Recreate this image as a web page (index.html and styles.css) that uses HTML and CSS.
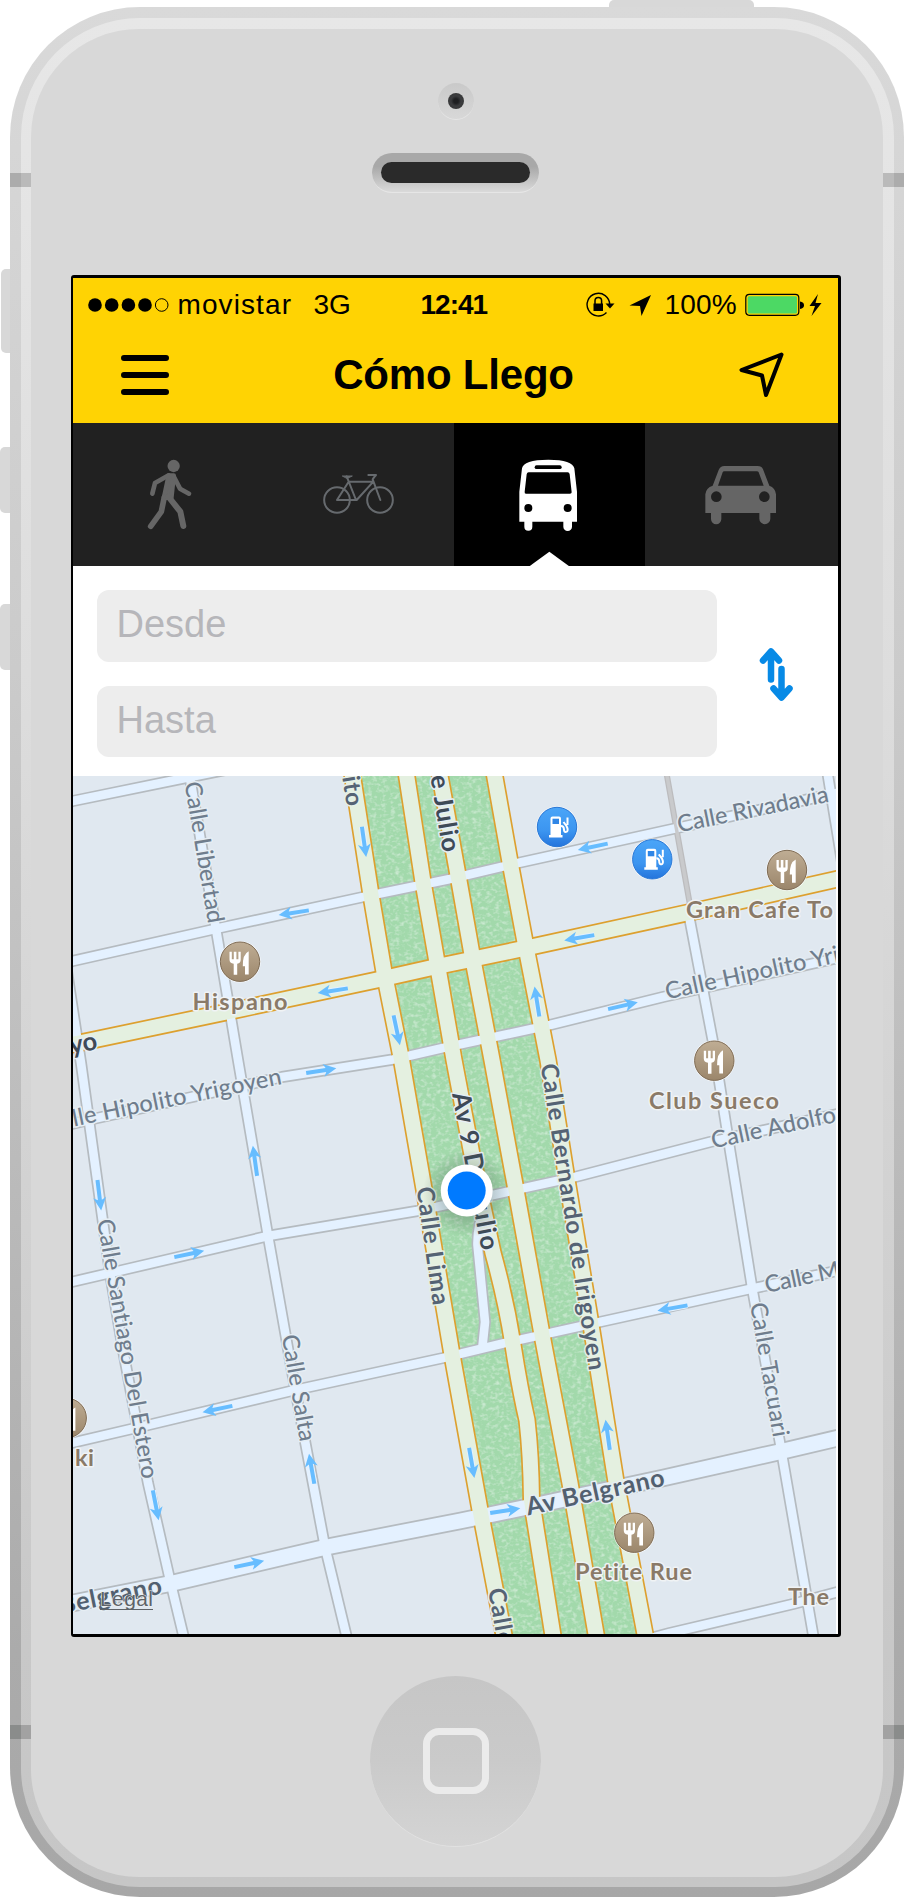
FILE: index.html
```html
<!DOCTYPE html>
<html lang="es">
<head>
<meta charset="utf-8">
<title>Cómo Llego</title>
<link rel="stylesheet" href="styles.css">
</head>
<body>
<div class="stage">
  <i class="key key-power"></i>
  <i class="key key-mute"></i>
  <i class="key key-up"></i>
  <i class="key key-down"></i>
  <div class="shell">
    <div class="bezel">
      <div class="face">
        <div class="camera"><i class="lens"></i></div>
        <div class="speaker"><i class="slot"></i></div>
        <main class="screen">
          <div class="statusbar">
            <svg class="signal" viewBox="0 0 82 14"><g><circle cx="7" cy="7" r="6.8"/><circle cx="23.7" cy="7" r="6.8"/><circle cx="40.4" cy="7" r="6.8"/><circle cx="57" cy="7" r="6.8"/><circle cx="73.7" cy="7" r="6.3" fill="none" stroke="#000" stroke-width="1"/></g></svg>
            <span class="carrier">movistar</span>
            <span class="network">3G</span>
            <span class="clock">12:41</span>
            <svg class="st-icons" viewBox="0 0 80 30">
              <path d="M20.5 22.500A11.300 11.300 0 1 1 23.700 14.500" fill="none" stroke="#000" stroke-width="1.400"/>
              <path d="M19.500 13.500h9l-4.500 5z"/>
              <path d="M7.500 13.500h9.500v7.500h-9.500z"/>
              <path d="M9 14v-3.200a3.300 3.300 0 0 1 6.600 0V14" fill="none" stroke="#000" stroke-width="1.500"/>
              <path d="M65 5 55.500 26 54 16 43.500 15.500z"/>
            </svg>
            <span class="percent">100%</span>
            <svg class="battery" viewBox="0 0 78 24">
              <rect x=".8" y="1.300" width="53" height="21" rx="3.500" fill="none" stroke="#000" stroke-width="1.200"/>
              <rect x="2.700" y="3.200" width="49.300" height="17.300" rx="1.500" fill="#4cd964"/>
              <path d="M55 8.500q4 .5 4 3.700t-4 3.700z"/>
              <path d="M73 1 64.500 13h5.500L66.500 23 76.500 10h-6z"/>
            </svg>
          </div>
          <header class="navbar">
            <svg class="menu" viewBox="0 0 48 40"><path d="M3 3h42M3 20h42M3 37h42" stroke="#000" stroke-width="6" stroke-linecap="round"/></svg>
            <h1 class="title">Cómo Llego</h1>
            <svg class="locate" viewBox="739 353 46 46"><path d="M781.500 355.500 741.500 371 762 376.500 766 396z" fill="none" stroke="#000" stroke-width="4" stroke-linejoin="round"/></svg>
          </header>
          <nav class="tabs">
            <a class="tab"><svg viewBox="39 474 573 429"><g fill="none" stroke="#666" stroke-linecap="round" stroke-linejoin="round"><circle cx="341" cy="603" r="18.500" fill="#666" stroke="none"/><path fill="#666" stroke-width="14" d="M326 632 341 632 334 698 312 698z"/><path stroke-width="14" d="M326 631 285 654 277 686M342 636 360 671 387 686"/><path stroke-width="17" d="M313 696 304 740 272 784"/><path stroke-width="18" d="M326 696 361 740 370 783"/></g></svg></a>
            <a class="tab"><svg viewBox="612 474 573 429"><g fill="none" stroke="#666a6e" stroke-width="6" stroke-linecap="round" stroke-linejoin="round"><circle cx="831" cy="705" r="38.500"/><circle cx="960" cy="705" r="38.500"/><path d="M831 705 866 650H940L890 705H831M860 634 888 705M925 630H948L942 637 938 643 961 705"/><path d="M848 633H877L862 640z" fill="#666a6e" stroke-width="3"/></g></svg></a>
            <a class="tab tab-on"><svg viewBox="14 474 573 429"><path fill="#fff" d="M210 770V680L218 610Q222 584 297 584 370 584 375 610L383 680V770H368V785a13 13 0 0 1-26 0V770H249V785a12 12 0 0 1-24 0V770z"/><path d="M238 622H355Q360 622 361 628L367 682Q367 686 362 686H230Q225 686 226 680L232 628Q233 622 238 622z"/><rect x="256" y="601" width="81" height="11" rx="5.500"/><circle cx="237" cy="729" r="12"/><circle cx="355" cy="729" r="12"/><path fill="#fff" d="M240 904 300 860 360 904z"/></svg></a>
            <a class="tab"><svg viewBox="587 474 573 429"><path fill="#656565" d="M768 744V688Q770 668 790 662L808 615Q813 603 825 603H925Q937 603 941 613L960 662Q978 668 980 688V744H963V761a16.500 16.500 0 0 1-33 0V744H816V762a15.500 15.500 0 0 1-31 0V744z"/><path fill="#212121" d="M806 662 820 622Q821 619 825 619H922Q927 619 928 622L943 662z"/><circle cx="801" cy="695" r="16" fill="#212121"/><circle cx="945" cy="695" r="16" fill="#212121"/></svg></a>
          </nav>
          <section class="search">
            <div class="fields">
              <div class="field">Desde</div>
              <div class="field">Hasta</div>
            </div>
            <svg class="swap" viewBox="0 0 36 56"><g fill="none" stroke="#078ae6" stroke-width="6.500" stroke-linecap="round" stroke-linejoin="round"><path d="M12 32.500V8M4 13.500 12 4.500 20 13.500"/><path d="M22.500 22V46M14.500 41.500 22.500 50.500 30.500 41.500"/><path d="M10 10h4M20.500 45h4"/></g></svg>
          </section>
          <section class="map">
            <svg class="map-canvas" viewBox="73 776 763 858">
              <defs>
                <filter id="grass" x="0" y="0" width="100%" height="100%">
                  <feTurbulence type="fractalNoise" baseFrequency=".22 .28" numOctaves="2" seed="4" result="n"/>
                  <feColorMatrix in="n" values="0 0 0 0 .8  0 0 0 0 .93  0 0 0 0 .84  1.300 0 0 0 -.6" result="w"/>
                  <feComposite in="w" in2="SourceGraphic" operator="in" result="c"/>
                  <feMerge><feMergeNode in="SourceGraphic"/><feMergeNode in="c"/></feMerge>
                </filter>
                <linearGradient id="brown" x2="0" y2="1"><stop offset="0" stop-color="#bfad94"/><stop offset="1" stop-color="#9b866b"/></linearGradient>
                <linearGradient id="blue" x2="0" y2="1"><stop offset="0" stop-color="#4aa5f8"/><stop offset=".6" stop-color="#3c95f0"/><stop offset="1" stop-color="#2474dc"/></linearGradient>
                <radialGradient id="halo"><stop offset=".4" stop-color="#46604e" stop-opacity=".38"/><stop offset="1" stop-color="#46604e" stop-opacity="0"/></radialGradient>
                <g id="arrow"><path d="M-15 0H7" stroke="#e4f1fe" stroke-width="6"/><path d="M-15-2H5L2.500-6.500 15.500 0 2.500 6.500 5 2H-15z" fill="#67bdff"/></g>
                <g id="food"><circle r="20.800" fill="#fff" opacity=".7"/><circle r="19.700" fill="url(#brown)" stroke="#7f6c55"/><path fill="#fff" d="M-10.500-10h2.300v7.500h2V-10h2.600v7.500h2V-10H.700V-2Q.700 1.500-2.800 2V13H-6.300V2Q-10.500 1.500-10.500-2zM8.700-10.500V12.800H5V4.500H2.800Q2.500-7.500 8.700-10.500z"/></g>
                <g id="fuel"><circle r="20.800" fill="#fff" opacity=".7"/><circle r="19.700" fill="url(#blue)" stroke="#2a78d6"/><path fill="#fff" d="M-6.500-8.500Q-6.500-10.500-4.500-10.500H2Q4-10.500 4-8.500V8H5.500V10.500H-8V8H-6.500z"/><path fill="#2f86e6" d="M-4.500-8.300H2V-3H-4.500z"/><path d="M4-1Q7-1 7 3 7.500 6 10 4.500 11.500 3 9.500-1L6.500-5M10.500-9.500V-2" fill="none" stroke="#fff" stroke-width="2"/></g>
                <path id="cerrito" d="M349 755 352.500 776 371 895 384 972 401 1057 425 1195 451.700 1353 480 1510 503.700 1634 508 1655"/>
                <path id="julioW" d="M403 755 406.700 776 423 882 438 968 454 1060 473 1160 493 1253Q506 1300 513 1345T527 1420Q531 1455 531.500 1500L552.700 1634 556 1655"/>
                <path id="julioE" d="M437 755 440 776 458.500 878 473 960 492 1060 516 1190 543 1340 570 1483 596 1634 600 1655"/>
                <path id="irigoyen" d="M491 755 494.700 776 510 862 525 942 548 1060 566.700 1178 590.700 1323 615.700 1480 645 1634 649 1655"/>
                <path id="mayo" d="M50 1049 79 1043 226.700 1012 376.700 980 430 968 533 946.500 688 912.700 860 874"/>
                <path id="belgrano" d="M50 1608 73 1603 173 1583 326.700 1547 460 1521 530 1506.500 663 1478 780 1451.700 860 1433"/>
                <g id="minor">
                  <path d="M50 806 73 801 195 776 250 765"/>
                  <path d="M50 966 73 961 215 929 363 897 450 879 518 863 677 828 860 788"/>
                  <path d="M50 1129 93 1119 282 1077 393 1059.500 443 1048 550 1025 663 997 860 953"/>
                  <path d="M50 1287 110 1273 268 1236 417 1211 493 1195 575 1177 710 1142 860 1109"/>
                  <path d="M50 1448 140 1427 293 1390.500 443 1358 505 1343 600 1322 750 1289 860 1266"/>
                  <path d="M640 1641 670 1633 793 1604 860 1586"/>
                  <path d="M66 965 81 1063 110 1273 123 1350 148 1483 170 1580 183 1634 188 1655"/>
                  <path d="M188 765 190 778 216 929 238 1060 268 1236 295 1388 325 1547 346 1634 351 1655"/>
                  <path d="M689 916 713 1042 730 1150 752 1287 780 1443 813 1634 817 1655"/>
                  <path d="M825 760 828 776 845 880"/>
                  <path d="M486 1205Q477 1225 477.500 1245L480 1270 485 1322 482.500 1346"/>
                </g>
              </defs>
              <rect x="73" y="776" width="765" height="858" fill="#e0e8f0"/>
              <path filter="url(#grass)" fill="#a2d9ab" d="M352 776 371 895 401 1057 451 1353 480 1510 503 1634H645L616 1480 591 1323 548 1060 525 942 495 776z"/>
              <g fill="none" stroke-linejoin="round">
                <g stroke="#b5bbc0"><use href="#minor" stroke-width="12"/><use href="#belgrano" stroke-width="18.500"/></g>
                <path d="M664 760 667 776 690 905" stroke="#bcbcbe" stroke-width="6"/>
                <g stroke="#dda02f" stroke-width="18.300"><use href="#mayo"/><use href="#cerrito"/><use href="#julioW"/><use href="#julioE"/><use href="#irigoyen"/></g>
                <g stroke="#e4f1ff"><use href="#minor" stroke-width="8.600"/><use href="#belgrano" stroke-width="15"/></g>
                <path d="M664 760 667 776 690 905" stroke="#c9cacc" stroke-width="3.500"/>
                <g stroke="#e4f0e0" stroke-width="15"><use href="#mayo"/><use href="#cerrito"/><use href="#julioW"/><use href="#julioE"/><use href="#irigoyen"/></g>
              </g>
              <g>
                <use href="#arrow" transform="translate(364 841.700) rotate(82)"/>
                <use href="#arrow" transform="translate(294 912.700) rotate(171)"/>
                <use href="#arrow" transform="translate(333 990.700) rotate(171)"/>
                <use href="#arrow" transform="translate(396.700 1030) rotate(78)"/>
                <use href="#arrow" transform="translate(593 846.700) rotate(168)"/>
                <use href="#arrow" transform="translate(579.500 937.700) rotate(170)"/>
                <use href="#arrow" transform="translate(537 1001.700) rotate(-99)"/>
                <use href="#arrow" transform="translate(622.700 1005.700) rotate(-13)"/>
                <use href="#arrow" transform="translate(321 1070.700) rotate(-9)"/>
                <use href="#arrow" transform="translate(255 1161) rotate(-98)"/>
                <use href="#arrow" transform="translate(99.300 1195) rotate(83)"/>
                <use href="#arrow" transform="translate(189 1254) rotate(-12)"/>
                <use href="#arrow" transform="translate(672.700 1308) rotate(170)"/>
                <use href="#arrow" transform="translate(217.700 1409) rotate(168)"/>
                <use href="#arrow" transform="translate(311.700 1469) rotate(-100)"/>
                <use href="#arrow" transform="translate(155.700 1505) rotate(79)"/>
                <use href="#arrow" transform="translate(249 1564) rotate(-12)"/>
                <use href="#arrow" transform="translate(471.700 1462.700) rotate(80)"/>
                <use href="#arrow" transform="translate(607.700 1435) rotate(-98)"/>
                <use href="#arrow" transform="translate(505 1510.700) rotate(-9)"/>
              </g>
              <g class="street">
                <text transform="translate(184.500 783) rotate(80.500)" textLength="143">Calle Libertad</text>
                <text transform="translate(679 832.500) rotate(-11.600)" textLength="154">Calle Rivadavia</text>
                <text transform="translate(667 999.500) rotate(-12.300)" textLength="241">Calle Hipolito Yrigoyen</text>
                <text transform="translate(282.700 1084) rotate(-11.500)" textLength="241" text-anchor="end">Calle Hipolito Yrigoyen</text>
                <text transform="translate(713 1148.500) rotate(-12.100)" textLength="127">Calle Adolfo</text>
                <text transform="translate(766.500 1293) rotate(-12)" textLength="134">Calle Moreno</text>
                <text transform="translate(750 1304) rotate(80.200)" textLength="136">Calle Tacuari</text>
                <text transform="translate(281.700 1336) rotate(80.300)" textLength="108">Calle Salta</text>
                <text transform="translate(97 1220.500) rotate(80.100)" textLength="263">Calle Santiago Del Estero</text>
              </g>
              <g class="street street-main">
                <text transform="translate(347 807) rotate(81)" text-anchor="end" textLength="79">Cerrito</text>
                <text transform="translate(416.500 1188) rotate(82)" textLength="119">Calle Lima</text>
                <text transform="translate(540.500 1065) rotate(81)" textLength="310">Calle Bernardo de Irigoyen</text>
                <text transform="translate(488 1589.500) rotate(80)" textLength="119">Calle Lima</text>
              </g>
              <g class="street street-avenue">
                <text transform="translate(443 853) rotate(80.500)" text-anchor="end" textLength="160">Av 9 De Julio</text>
                <text transform="translate(452 1094) rotate(79.300)" textLength="160">Av 9 De Julio</text>
                <text transform="translate(98.500 1049) rotate(-11)" text-anchor="end">Av de Mayo</text>
              </g>
              <g class="street street-road">
                <text transform="translate(528 1515.500) rotate(-12.300)" textLength="141">Av Belgrano</text>
                <text transform="translate(163 1593.500) rotate(-11.500)" text-anchor="end" textLength="141">Av Belgrano</text>
              </g>
              <text class="legal" x="100" y="1606" textLength="53">Legal</text>
              <path d="M100 1609.500H153" stroke="#5e6368" stroke-width="1.200"/>
              <use href="#food" x="240" y="961.700"/>
              <use href="#food" x="787" y="870"/>
              <use href="#food" x="714.300" y="1060.700"/>
              <use href="#food" x="634.300" y="1532.700"/>
              <use href="#food" x="66.700" y="1418"/>
              <use href="#fuel" x="557" y="827"/>
              <use href="#fuel" x="652.300" y="859.300"/>
              <g class="place">
                <text x="192.500" y="1009.800" textLength="95">Hispano</text>
                <text x="686" y="917.800" textLength="147">Gran Cafe To</text>
                <text x="649" y="1108.800" textLength="130">Club Sueco</text>
                <text x="575" y="1579.800" textLength="117">Petite Rue</text>
                <text x="788" y="1604.500" textLength="41">The</text>
                <text x="75" y="1466.200" textLength="19">ki</text>
              </g>
              <circle cx="466.700" cy="1193" r="44" fill="url(#halo)"/>
              <circle cx="466.700" cy="1190.500" r="26" fill="#fff"/>
              <circle cx="466.700" cy="1190.500" r="19" fill="#007aff"/>
            </svg>
          </section>
        </main>
        <div class="home"><i class="home-square"></i></div>
      </div>
    </div>
    <i class="band band-tl"></i><i class="band band-tr"></i>
    <i class="band band-bl"></i><i class="band band-br"></i>
  </div>
</div>
</body>
</html>
```
FILE: styles.css
```css
* { box-sizing: border-box; }
html, body { margin: 0; background: #fff; overflow: hidden; }
body { font-family: "Liberation Sans", Arial, sans-serif; color: #000; }
svg { display: block; flex: none; }

.stage { position: relative; width: 905px; height: 1897px; padding: 7px 1px 0 10px; }

/* hardware keys sit behind the shell */
.key { position: absolute; background: #d8d8d8; }
.key-power { left: 609px; top: 0; width: 145px; height: 20px; border-radius: 5px 5px 0 0; }
.key-mute { left: 1px; top: 269px; width: 20px; height: 84px; border-radius: 5px; }
.key-up { left: 0; top: 447px; width: 20px; height: 66px; border-radius: 5px; }
.key-down { left: 0; top: 604px; width: 20px; height: 66px; border-radius: 5px; }

.shell {
  position: relative; height: 1890px; padding: 11px 10px 10px 11px; border-radius: 130px;
  background: linear-gradient(#d9d9d9, #cbcbcb 35%, #ababab 87%, #a7a7a7);
}
.bezel {
  height: 1869px; padding: 11px 11px 10px 10px; border-radius: 119px;
  background: linear-gradient(#e7e7e7, #dddddd 35%, #c8c8c8 87%, #c6c6c6);
}
.face {
  height: 1848px; padding: 54px 3px 0 0; border-radius: 108px; background: #d8d8d8;
  display: flex; flex-direction: column; align-items: center;
}
.band { position: absolute; width: 21px; height: 14px; }
.band-tl, .band-tr { top: 166px; }
.band-bl, .band-br { top: 1718px; }
.band-tl, .band-bl { left: 0; }
.band-tr, .band-br { right: 0; }
.band-tl { background: linear-gradient(90deg, #acacac 11px, #bababa 11px); }
.band-tr { background: linear-gradient(270deg, #acacac 10px, #bababa 10px); }
.band-bl { background: linear-gradient(90deg, #8a8c8b 11px, #a2a2a2 11px); }
.band-br { background: linear-gradient(270deg, #8a8c8b 10px, #a2a2a2 10px); }

.camera {
  width: 36px; height: 37px; border-radius: 50%; background: linear-gradient(#c9c9c9, #d8d8d8);
  border-bottom: 1px solid #e6e6e6; display: flex; align-items: center; justify-content: center;
}
.lens { width: 16px; height: 16px; border-radius: 50%; background: radial-gradient(#1e1f21 20%, #3b3c3e 45%, #343434); }
.speaker {
  margin-top: 33px; width: 167px; height: 40px; padding: 9px; border-radius: 20px;
  background: linear-gradient(#a8a8a8 35%, #dadada); border-bottom: 1px solid #e6e6e6;
}
.slot { display: block; height: 21px; border-radius: 11px; background: #2a2a2a; }

.screen {
  margin-top: 82px; width: 770px; height: 1362px; border: 3px solid #000; border-left-width: 2px;
  border-radius: 3px; background: #fff; display: flex; flex-direction: column; overflow: hidden;
}
.statusbar {
  height: 54px; padding-left: 15px; background: #ffd303; display: flex; align-items: center;
  font-size: 28px; line-height: 32px; white-space: nowrap;
}
.signal { width: 82px; height: 14px; }
.carrier { width: 136px; margin-left: 8px; letter-spacing: 1.1px; }
.network { width: 107px; }
.clock { width: 84px; font-weight: bold; letter-spacing: -1px; }
.st-icons { width: 80px; height: 30px; margin-left: 81px; }
.percent { width: 80px; letter-spacing: .2px; margin-left: -1px; }
.battery { width: 78px; height: 24px; }

.navbar {
  height: 91px; padding: 0 53px 6px 48px; background: #ffd303; display: flex;
  align-items: center; justify-content: space-between;
}
.menu { width: 48px; height: 40px; }
.title { margin: 0; font-size: 42px; line-height: 48px; letter-spacing: -.2px; }
.locate { width: 46px; height: 46px; }

.tabs { height: 143px; display: flex; background: #212121; border-bottom: 1px solid #444; }
.tab { width: 191px; height: 143px; background: #212121; }
.tab-on { background: #000; }
.tab:nth-child(2) { width: 190px; }
.tab svg { width: 191px; height: 143px; }
.tab:last-child { width: 193px; }

.search { height: 210px; padding: 24px 43px 19px 24px; display: flex; justify-content: space-between; align-items: flex-start; background: #fff; }
.fields { width: 620px; display: flex; flex-direction: column; gap: 24px; }
.field { height: 71.500px; padding: 0 20px; border-radius: 12px; background: #ededed; color: #b6b6ba; font-size: 38px; line-height: 69px; }
.swap { width: 36px; height: 56px; margin-top: 57px; }

.map { height: 858px; background: #fff; }
.map-canvas { width: 763px; height: 858px; }
.street, .place { font-family: Lato, "Open Sans", sans-serif; font-variant-ligatures: none; paint-order: stroke; stroke: #e6eef4; stroke-width: 3px; stroke-linejoin: round; }
.street { font-size: 23.500px; font-weight: 500; fill: #6f7d8d; }
.street-main { font-size: 24px; font-weight: 700; fill: #556374; stroke: #e6f0e6; }
.street-avenue { font-size: 25.500px; font-weight: 700; fill: #3e4a58; }
.street-road { font-size: 25px; font-weight: 700; fill: #526070; }
.place { font-size: 23.500px; font-weight: 700; fill: #8a7a68; stroke: #f0f3f5; }
.legal { font-size: 21px; fill: #5e6368; stroke: #eef2f5; stroke-width: 1px; paint-order: stroke; }

.home {
  margin-top: 39px; width: 171px; height: 171px; border-radius: 50%; border-bottom: 1px solid #e2e2e2;
  background: linear-gradient(#c6c6c6, #cacaca 50%, #d4d4d4); display: flex; align-items: center; justify-content: center;
}
.home-square { width: 66px; height: 66px; border: 7px solid #ebebeb; border-radius: 16px; }
```
